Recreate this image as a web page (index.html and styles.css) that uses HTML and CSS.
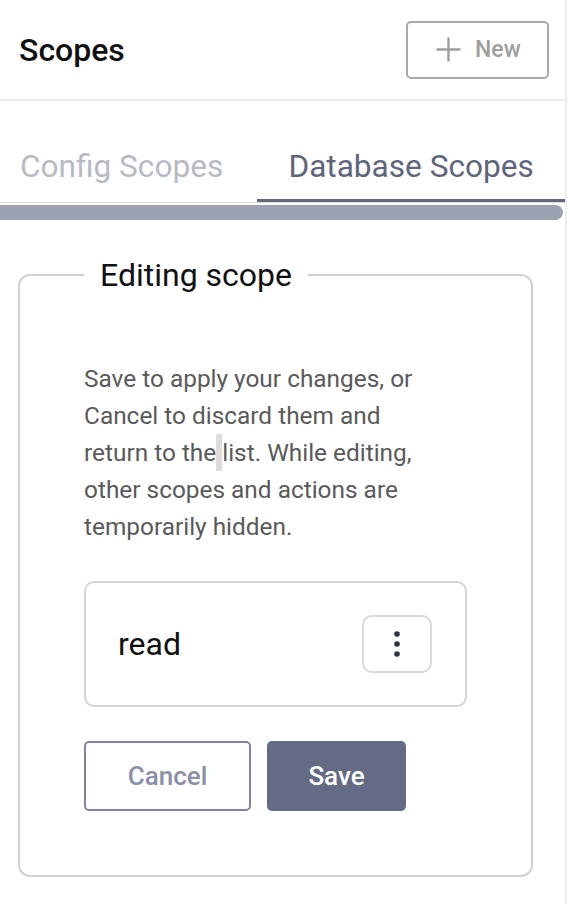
FILE: index.html
```html
<!DOCTYPE html>
<html lang="en">
<head>
<meta charset="utf-8">
<title>Scopes</title>
<link rel="stylesheet" href="styles.css">
</head>
<body>
<div class="panel">
  <header class="header">
    <h1 class="title">Scopes</h1>
    <button class="new-btn" type="button">
      <svg class="plus" width="25" height="25" viewBox="0 0 25 25" aria-hidden="true">
        <path d="M12.5 0.5v24M0.5 12.5h24" stroke="currentColor" stroke-width="2.4" fill="none"/>
      </svg>
      <span>New</span>
    </button>
  </header>

  <nav class="tabs">
    <div class="tab">Config Scopes</div>
    <div class="tab tab-active">Database Scopes</div>
  </nav>
  <div class="tabs-track"></div>
  <div class="tabs-thumb"></div>

  <fieldset class="edit-box">
    <legend class="edit-legend">Editing scope</legend>
    <p class="help">Save to apply your changes, or<br>Cancel to discard them and<br>return to the<span class="sel"></span>list. While editing,<br>other scopes and actions are<br>temporarily hidden.</p>

    <div class="scope-card">
      <span class="scope-name">read</span>
      <button class="kebab" type="button" aria-label="More">
        <svg width="6" height="26" viewBox="0 0 6 26" aria-hidden="true">
          <circle cx="3" cy="3" r="2.8" fill="#2c3240"/>
          <circle cx="3" cy="13" r="2.8" fill="#2c3240"/>
          <circle cx="3" cy="23" r="2.8" fill="#2c3240"/>
        </svg>
      </button>
    </div>

    <div class="actions">
      <button class="btn btn-cancel" type="button">Cancel</button>
      <button class="btn btn-save" type="button">Save</button>
    </div>
  </fieldset>
</div>
</body>
</html>
```

FILE: styles.css
```css
html, body {
  margin: 0;
  padding: 0;
  background: #ffffff;
}

body {
  font-family: Roboto, "Liberation Sans", Arial, sans-serif;
}

.panel {
  width: 565px;
  min-height: 904px;
  border-right: 2px solid #ededed;
  box-sizing: content-box;
}

.header {
  display: flex;
  align-items: center;
  justify-content: space-between;
  padding: 0 16px 0 19px;
  box-sizing: border-box;
  height: 101px;
  border-bottom: 2px solid #ececec;
}

.title {
  margin: 0;
  font-size: 32px;
  font-weight: 500;
  color: #111111;
  line-height: 36px;
}

.new-btn {
  width: 143px;
  height: 58px;
  border: 2px solid #a9a9a9;
  border-radius: 5px;
  background: #ffffff;
  display: flex;
  align-items: center;
  gap: 14px;
  padding: 0 0 0 28px;
  box-sizing: border-box;
  color: #9e9e9e;
  font-family: Roboto, "Liberation Sans", Arial, sans-serif;
  font-size: 23px;
  font-weight: 500;
}

.plus {
  display: block;
}

.tabs {
  display: flex;
  margin-top: 48px;
}

.tab {
  font-size: 31.6px;
  line-height: 36px;
  color: #b7bac4;
  padding: 0 34px 14px 20px;
  border-bottom: 3px solid transparent;
  white-space: nowrap;
}

.tab-active {
  flex: 1;
  text-align: center;
  padding: 0 0 14px 0;
  color: #5e657d;
  border-bottom-color: #62697f;
}

.tabs-track {
  height: 1px;
  background: #dcdcdc;
}

.tabs-thumb {
  margin-top: 2px;
  width: 563px;
  height: 15px;
  background: #9ca1b3;
  border-radius: 0 8px 8px 0;
}

.edit-box {
  margin: 37px 32px 0 18px;
  border: 2px solid #d0d0d0;
  border-radius: 12px;
  padding: 67px 64px 64px;
  min-width: 0;
}

.edit-legend {
  padding: 0 16px;
  font-size: 32px;
  line-height: 36px;
  color: #111111;
}

.help {
  margin: 0;
  font-size: 24.4px;
  line-height: 37px;
  color: #5a5a5a;
}

.sel {
  display: inline-block;
  width: 6px;
  height: 37px;
  vertical-align: top;
  background: #dcdcdc;
}

.scope-card {
  margin-top: 36px;
  height: 126px;
  border: 2px solid #d4d4d4;
  border-radius: 10px;
  box-sizing: border-box;
  display: flex;
  align-items: center;
  justify-content: space-between;
  padding: 0 33px 0 32px;
}

.scope-name {
  font-size: 32px;
  color: #111111;
}

.kebab {
  width: 70px;
  height: 58px;
  border: 2px solid #d6dade;
  border-radius: 10px;
  background: #ffffff;
  display: flex;
  align-items: center;
  justify-content: center;
  padding: 0;
  box-sizing: border-box;
}

.kebab svg {
  display: block;
}

.actions {
  display: flex;
  gap: 16px;
  margin-top: 34px;
}

.btn {
  height: 70px;
  border-radius: 5px;
  font-family: Roboto, "Liberation Sans", Arial, sans-serif;
  font-size: 26px;
  font-weight: 500;
  box-sizing: border-box;
  padding: 0;
}

.btn-cancel {
  width: 167px;
  background: #ffffff;
  border: 2px solid #7f859f;
  color: #8a90a8;
}

.btn-save {
  width: 139px;
  background: #646b85;
  border: none;
  color: #ffffff;
}
```
